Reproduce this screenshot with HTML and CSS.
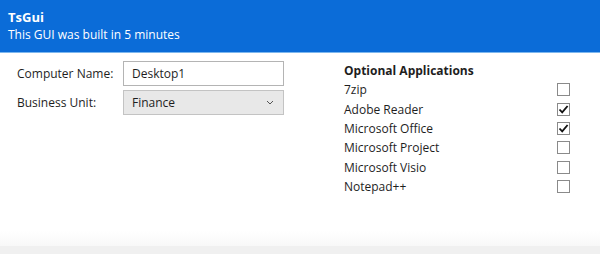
FILE: index.html
```html
<!DOCTYPE html>
<html lang="en">
<head>
    <meta charset="UTF-8">
    <meta name="viewport" content="width=device-width, initial-scale=1.0">
    <title>TsGui</title>
    <link rel="stylesheet" href="styles.css">
</head>
<body>
    <header class="banner">
        <div class="banner-title">TsGui</div>
        <div class="banner-sub">This GUI was built in 5 minutes</div>
    </header>

    <main class="page">
        <div class="fields">
            <label class="field-label">Computer Name:</label>
            <div class="textbox">Desktop1</div>
            <label class="field-label">Business Unit:</label>
            <div class="combo">
                <span>Finance</span>
                <svg class="chevron" width="8" height="5" viewBox="0 0 8 5"><path d="M1 1 L4 4 L7 1" fill="none" stroke="#555" stroke-width="1"/></svg>
            </div>
        </div>

        <div class="apps">
            <div class="apps-title">Optional Applications</div>
            <div class="app-row"><span>7zip</span><span class="check"></span></div>
            <div class="app-row"><span>Adobe Reader</span><span class="check on"><svg width="11" height="11" viewBox="0 0 11 11"><path d="M1.5 5.5 L4.2 8.4 L9.6 2" fill="none" stroke="#111" stroke-width="1.8"/></svg></span></div>
            <div class="app-row"><span>Microsoft Office</span><span class="check on"><svg width="11" height="11" viewBox="0 0 11 11"><path d="M1.5 5.5 L4.2 8.4 L9.6 2" fill="none" stroke="#111" stroke-width="1.8"/></svg></span></div>
            <div class="app-row"><span>Microsoft Project</span><span class="check"></span></div>
            <div class="app-row"><span>Microsoft Visio</span><span class="check"></span></div>
            <div class="app-row"><span>Notepad++</span><span class="check"></span></div>
        </div>
    </main>

    <footer class="bottom-bar"></footer>
</body>
</html>
```

FILE: styles.css
```css
body {
    margin: 0;
    padding: 0;
    height: 254px;
    display: flex;
    flex-direction: column;
    font-family: "Open Sans", "Noto Sans", sans-serif;
    font-size: 12px;
    color: #1e1e1e;
    background: #ffffff;
    overflow: hidden;
}
.banner {
    background: #0b6cd8;
    color: white;
    height: 53px;
    padding: 8px 8px 0;
    box-sizing: border-box;
    border-bottom: 1px solid #7db7ee;
}
.banner-title {
    font-weight: bold;
    font-size: 13px;
    line-height: 18px;
}
.banner-sub {
    font-size: 12px;
    line-height: 18px;
}
.page {
    display: flex;
    padding: 8px 0 0 17px;
    flex: 1;
    background: linear-gradient(to bottom, #ffffff 92%, #f8f8f8);
}
.fields {
    display: grid;
    grid-template-columns: 106px 161px;
    row-gap: 4px;
    align-items: center;
    align-self: flex-start;
}
.field-label {
    line-height: 25px;
}
.textbox {
    height: 25px;
    line-height: 23px;
    box-sizing: border-box;
    border: 1px solid #b4b4b4;
    padding: 0 8px;
    background: white;
}
.combo {
    height: 25px;
    box-sizing: border-box;
    border: 1px solid #c3c3c3;
    background: #e8e8e8;
    padding: 0 9px 0 8px;
    display: flex;
    align-items: center;
    justify-content: space-between;
}
.apps {
    margin-left: 60px;
    width: 226px;
}
.apps-title {
    font-weight: bold;
    line-height: 19px;
}
.app-row {
    display: flex;
    justify-content: space-between;
    align-items: center;
    height: 19.4px;
}
.check {
    width: 13px;
    height: 13px;
    box-sizing: border-box;
    border: 1px solid #8a8a8a;
    background: white;
    display: flex;
    align-items: center;
    justify-content: center;
}
.bottom-bar {
    height: 8px;
    background: #f0f0f0;
}
```
